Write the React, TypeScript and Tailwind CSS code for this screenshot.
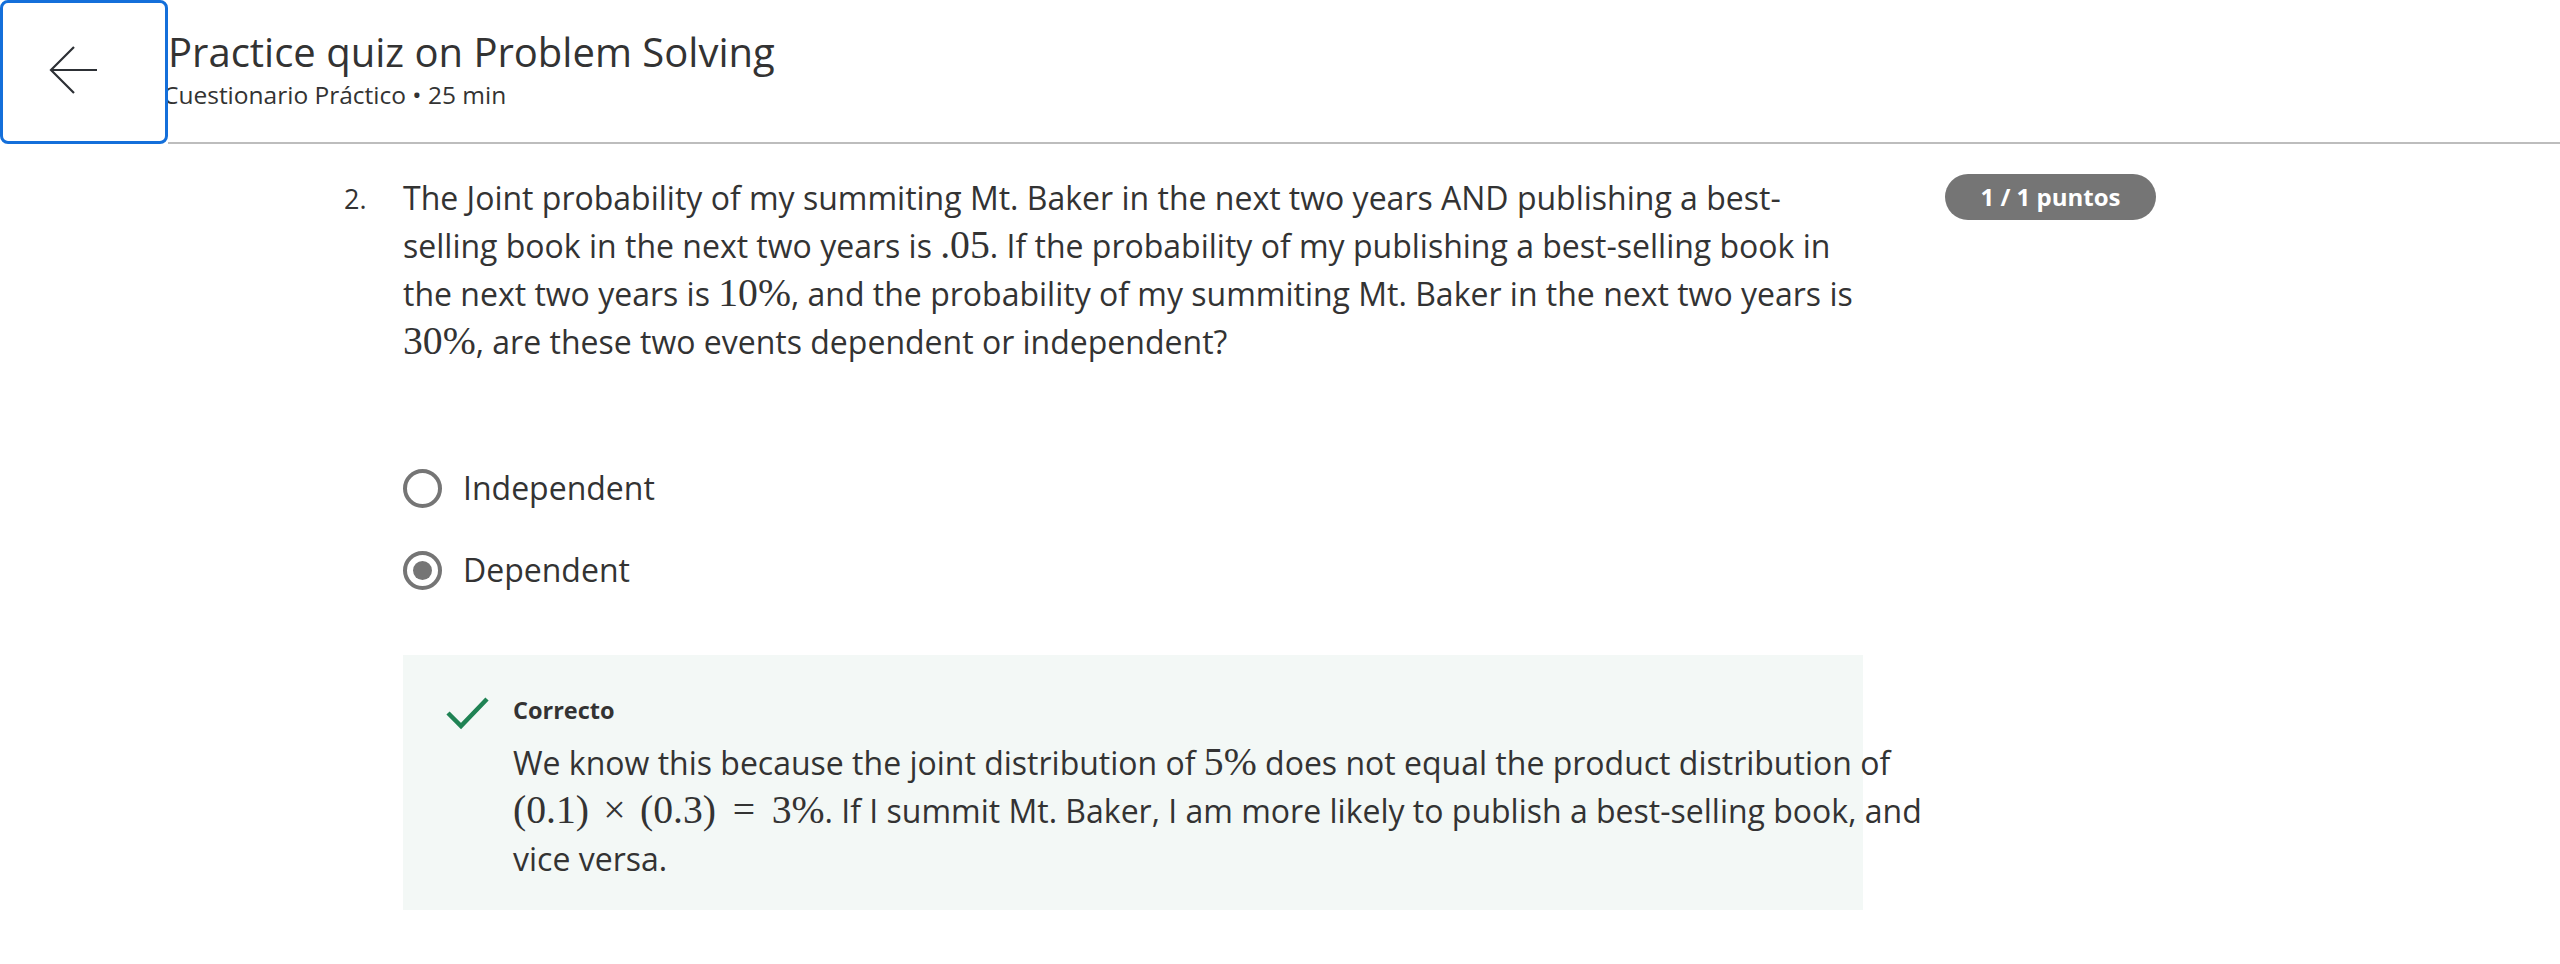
import React from "react";

function M({ children }: { children: React.ReactNode }) {
  return (
    <span className="font-['Liberation_Serif',serif] text-[1.24em] leading-none">
      {children}
    </span>
  );
}

function Radio({ checked, label }: { checked?: boolean; label: string }) {
  return (
    <div className="flex items-center h-[48px]">
      <span className="flex items-center justify-center w-[39px] h-[39px] rounded-full border-[4px] border-[#757575] shrink-0">
        {checked && <span className="w-[19px] h-[19px] rounded-full bg-[#757575]" />}
      </span>
      <span className="ml-[21px] text-[32px] leading-[48px]">{label}</span>
    </div>
  );
}

export default function App() {
  return (
    <div className="min-h-screen bg-white text-[#333] font-['Open_Sans',sans-serif]">
      <header className="flex">
        <button className="relative z-10 w-[168px] h-[144px] shrink-0 bg-white border-[3px] border-[#146fda] rounded-[8px] flex items-center pl-[45px]">
          <svg width="50" height="48" viewBox="0 0 50 48" className="mt-[-4px]">
            <path
              d="M49 24H3M26 1L3 24l23 23"
              fill="none"
              stroke="#2d3035"
              strokeWidth="2.2"
            />
          </svg>
        </button>
        <div className="flex-1 h-[144px] border-b-2 border-[#bdbdbd] pt-[28px]">
          <h1 className="text-[40px] leading-[48px] font-normal">Practice quiz on Problem Solving</h1>
          <p className="text-[24.5px] leading-[32px] mt-[3px] ml-[-5px]">Cuestionario Práctico • 25 min</p>
        </div>
      </header>

      <main className="flex pl-[340px] pt-[30px]">
        <div className="w-[63px] shrink-0 text-[27px] leading-[48px] pt-[1px] pl-[4px]">2.</div>
        <div className="w-[1460px] shrink-0">
          <div className="text-[32px] leading-[48px] whitespace-nowrap">
            <div>The Joint probability of my summiting Mt. Baker in the next two years AND publishing a best-</div>
            <div>
              selling book in the next two years is <M>.05</M>. If the probability of my publishing a best-selling book in
            </div>
            <div>
              the next two years is <M>10%</M>, and the probability of my summiting Mt. Baker in the next two years is
            </div>
            <div>
              <M>30%</M>, are these two events dependent or independent?
            </div>
          </div>

          <div className="mt-[98px] flex flex-col gap-[34px]">
            <Radio label="Independent" />
            <Radio label="Dependent" checked />
          </div>

          <div className="mt-[61px] w-[1460px] bg-[#f3f8f6] pt-[39px] pb-[27px] pl-[42px] flex">
            <svg width="46" height="34" viewBox="0 0 46 34" className="shrink-0 mt-[2px]">
              <path d="M3 17l13 13L42 3" fill="none" stroke="#1f8354" strokeWidth="4.5" />
            </svg>
            <div className="ml-[22px]">
              <div className="text-[23.5px] leading-[32px] font-bold">Correcto</div>
              <div className="mt-[13px] text-[32px] leading-[48px] whitespace-nowrap">
                <div>
                  We know this because the joint distribution of <M>5%</M> does not equal the product distribution of
                </div>
                <div>
                  <M>
                    (0.1)<span className="mx-[0.36em]">×</span>(0.3)<span className="mx-[0.42em]">=</span>3%
                  </M>
                  . If I summit Mt. Baker, I am more likely to publish a best-selling book, and
                </div>
                <div>vice versa.</div>
              </div>
            </div>
          </div>
        </div>
        <div className="ml-[82px] shrink-0">
          <span className="flex items-center justify-center w-[211px] h-[46px] rounded-full bg-[#757575] text-white text-[24px] font-bold">
            1 / 1 puntos
          </span>
        </div>
      </main>
    </div>
  );
}
